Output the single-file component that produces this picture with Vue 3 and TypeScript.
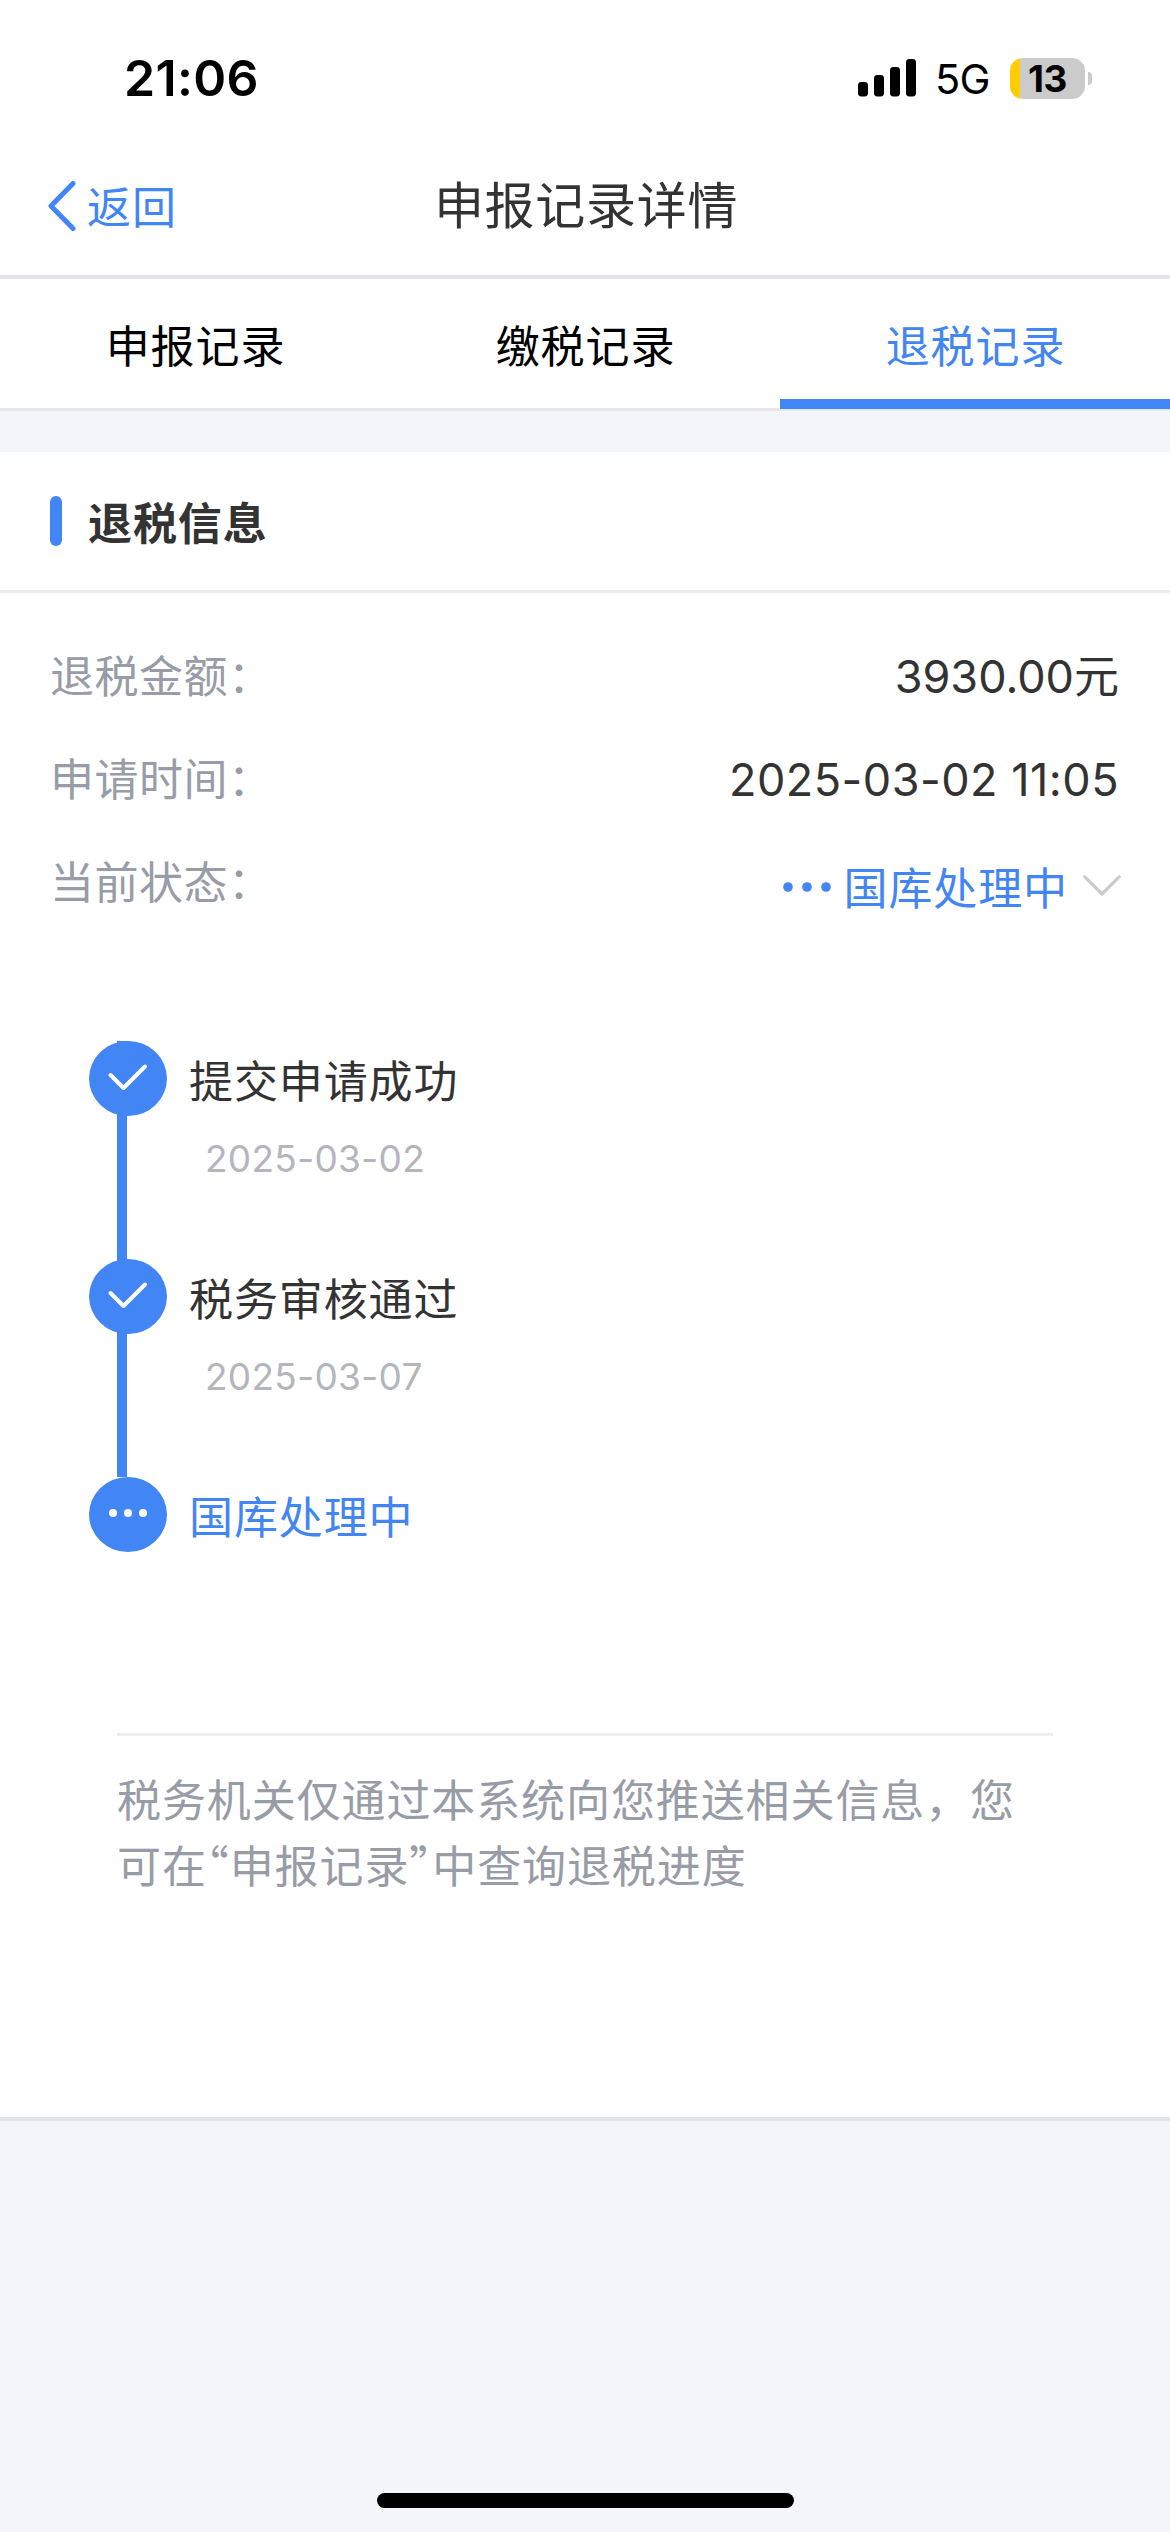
<script setup lang="ts">
interface Tab {
  label: string
  active: boolean
}

interface Step {
  title: string
  date?: string
  done: boolean
}

const tabs: Tab[] = [
  { label: '申报记录', active: false },
  { label: '缴税记录', active: false },
  { label: '退税记录', active: true },
]

const steps: Step[] = [
  { title: '提交申请成功', date: '2025-03-02', done: true },
  { title: '税务审核通过', date: '2025-03-07', done: true },
  { title: '国库处理中', done: false },
]
</script>

<template>
  <div class="screen" lang="zh-CN">
    <div class="status-bar">
      <span class="clock">21:06</span>
      <div class="indicators">
        <svg class="signal" width="58" height="38" viewBox="0 0 58 38">
          <rect x="0" y="23" width="10" height="14.5" rx="3.4" />
          <rect x="16" y="16" width="10" height="21.5" rx="3.4" />
          <rect x="32" y="8" width="10" height="29.5" rx="3.4" />
          <rect x="48" y="0" width="10" height="37.5" rx="3.4" />
        </svg>
        <span class="network">5G</span>
        <div class="battery">
          <span class="battery-level">13</span>
        </div>
        <span class="battery-cap"></span>
      </div>
    </div>

    <header class="nav">
      <a class="back">
        <svg width="30" height="52" viewBox="0 0 30 52">
          <path d="M26 3.5 L4 26 L26 48.5" fill="none" stroke="#4285f4" stroke-width="5" stroke-linecap="round" stroke-linejoin="round" />
        </svg>
        <span class="back-label">返回</span>
      </a>
      <h1 class="nav-title">申报记录详情</h1>
      <span></span>
    </header>

    <nav class="tabs">
      <a v-for="tab in tabs" :key="tab.label" class="tab" :class="{ active: tab.active }">{{ tab.label }}</a>
    </nav>

    <main class="card">
      <div class="card-head">
        <span class="marker"></span>
        <h2 class="card-title">退税信息</h2>
      </div>

      <dl class="info">
        <div class="row">
          <dt>退税金额：</dt>
          <dd class="amount">3930.00元</dd>
        </div>
        <div class="row">
          <dt>申请时间：</dt>
          <dd class="datetime">2025-03-02 11:05</dd>
        </div>
        <div class="row">
          <dt>当前状态：</dt>
          <dd class="state">
            <svg class="dots" width="48" height="12" viewBox="0 0 48 12" fill="#4285f4">
              <circle cx="5" cy="6" r="4.8" />
              <circle cx="24" cy="6" r="4.8" />
              <circle cx="43" cy="6" r="4.8" />
            </svg>
            <span class="state-label">国库处理中</span>
            <svg class="chevron" width="38" height="22" viewBox="0 0 38 22">
              <path d="M1.8 1.8 L19 19 L36.2 1.8" fill="none" stroke="#cccccc" stroke-width="3.2" stroke-linecap="round" stroke-linejoin="round" />
            </svg>
          </dd>
        </div>
      </dl>

      <ol class="timeline">
        <li v-for="step in steps" :key="step.title" class="step" :class="{ done: step.done }">
          <div class="rail">
            <svg class="node" width="78" height="75" viewBox="0 0 78 75">
              <ellipse cx="39" cy="37.5" rx="39" ry="37.5" fill="#4285f4" />
              <path v-if="step.done" d="M21.5 34 L34.5 47 L56 25.5" fill="none" stroke="#fff" stroke-width="4" stroke-linecap="round" stroke-linejoin="round" />
              <g v-else fill="#fff">
                <circle cx="24" cy="36" r="4" />
                <circle cx="39" cy="36" r="4" />
                <circle cx="54" cy="36" r="4" />
              </g>
            </svg>
          </div>
          <div class="step-body">
            <div class="step-title">{{ step.title }}</div>
            <div v-if="step.date" class="step-date">{{ step.date }}</div>
          </div>
        </li>
      </ol>

      <p class="notice">
        <span class="notice-line">税务机关仅通过本系统向您推送相关信息，您</span>
        <span class="notice-line">可在<span class="quote">“</span>申报记录<span class="quote">”</span>中查询退税进度</span>
      </p>
    </main>

    <footer class="home-area">
      <span class="home-indicator"></span>
    </footer>
  </div>
</template>

<style>
html,
body {
  margin: 0;
  background: #f4f5fa;
}
</style>

<style scoped>
.screen {
  display: flex;
  flex-direction: column;
  width: 1170px;
  height: 2532px;
  overflow: hidden;
  background: #f4f5fa;
  color: #333;
  font-family: Inter, "Noto Sans CJK SC", sans-serif;
  font-size: 44px;
  letter-spacing: 0.9px;
  line-height: 60px;
}

.status-bar {
  display: flex;
  justify-content: space-between;
  box-sizing: border-box;
  height: 137px;
  padding: 48px 78px 0 124px;
  background: #fff;
  color: #000;
}

.clock {
  font-size: 50px;
  font-weight: 600;
  letter-spacing: 0.3px;
}

.indicators {
  display: flex;
  align-items: center;
  height: 60px;
}

.signal {
  margin-right: 19px;
}

.network {
  width: 56px;
  margin-right: 19px;
  font-size: 41.5px;
  letter-spacing: -0.8px;
  white-space: nowrap;
  padding-top: 2px;
}

.battery {
  box-sizing: border-box;
  width: 75px;
  height: 41px;
  border-radius: 13px;
  background: linear-gradient(to right, #ffcc00 10.5px, #cbcbcb 10.5px);
  text-align: center;
}

.battery-level {
  display: block;
  font-size: 37px;
  font-weight: 700;
  letter-spacing: -0.3px;
  line-height: 41px;
}

.battery-cap {
  width: 4px;
  height: 13px;
  margin-left: 3px;
  border-radius: 0 4px 4px 0;
  background: #cbcbcb;
}

.nav {
  display: grid;
  grid-template-columns: 1fr auto 1fr;
  align-items: center;
  height: 138px;
  border-bottom: 4px solid #e3e3e9;
  background: #fff;
}

.back {
  display: flex;
  align-items: center;
  padding-left: 47px;
  color: #4285f4;
}

.back-label {
  margin: 4px 0 0 10px;
}

.nav-title {
  margin: 0;
  padding-left: 2px;
  color: #333;
  font-size: 50px;
  font-weight: 400;
  letter-spacing: 0.7px;
}

.tabs {
  display: grid;
  grid-template-columns: repeat(3, 1fr);
  height: 129px;
  border-bottom: 3px solid #e8e8ea;
  background: #fff;
}

.tab {
  box-sizing: border-box;
  height: 130px;
  padding: 38px 0 0 1px;
  color: #000;
  text-align: center;
}

.tab.active {
  border-bottom: 10px solid #4285f4;
  color: #4285f4;
}

.card {
  box-sizing: border-box;
  height: 1669px;
  margin-top: 41px;
  border-bottom: 4px solid #e3e4e9;
  background: #fff;
}

.card-head {
  display: flex;
  align-items: center;
  height: 138px;
  padding-left: 50px;
  border-bottom: 3px solid #ebebf0;
}

.marker {
  width: 12px;
  height: 50px;
  border-radius: 6px;
  background: #4285f4;
}

.card-title {
  margin: 5px 0 0 26px;
  font-size: 44px;
  font-weight: 700;
}

.info {
  margin: 0;
  padding: 54px 50px 0 50px;
}

.row {
  display: flex;
  justify-content: space-between;
  height: 60px;
  margin-bottom: 43px;
}

dt {
  color: #989ca6;
  letter-spacing: 0.5px;
}

dd {
  margin: 0;
}

.amount,
.datetime {
  padding-right: 1px;
  font-size: 45px;
  letter-spacing: 0;
}

.datetime {
  letter-spacing: 0.5px;
}

.state {
  display: flex;
  align-items: center;
  padding-top: 6px;
  height: 60px;
  color: #4285f4;
}

.state-label {
  margin: 0 15px 0 13px;
}

.dots {
  margin-bottom: 4px;
}

.chevron {
  margin: 0 -1px 7px 0;
}

.timeline {
  margin: 0;
  padding: 85px 0 0 89px;
  list-style: none;
}

.step {
  display: flex;
  height: 218px;
  color: #4285f4;
}

.step.done {
  color: #333;
}

.rail {
  width: 78px;
  margin-right: 22px;
}

.step.done .rail {
  background: linear-gradient(#4285f4, #4285f4) 28px 0 / 10px 100% no-repeat;
}

.node {
  display: block;
}

.step-body {
  padding-top: 11px;
}

.step-date {
  margin: 17px 0 0 16px;
  color: #b5b5bc;
  font-size: 37px;
  letter-spacing: 0.3px;
}

.notice {
  margin: 38px 117px 0 117px;
  padding-top: 33px;
  border-top: 3px solid #ededf2;
  color: #989ca6;
  line-height: 65.5px;
}

.notice-line {
  display: block;
}

.quote {
  font-family: "Noto Sans CJK SC", sans-serif;
  font-feature-settings: "halt";
  line-height: 1;
}

.home-area {
  display: flex;
  flex: 1;
  align-items: flex-end;
  justify-content: center;
  padding-bottom: 24px;
}

.home-indicator {
  width: 417px;
  height: 15px;
  border-radius: 8px;
  background: #000;
}
</style>
